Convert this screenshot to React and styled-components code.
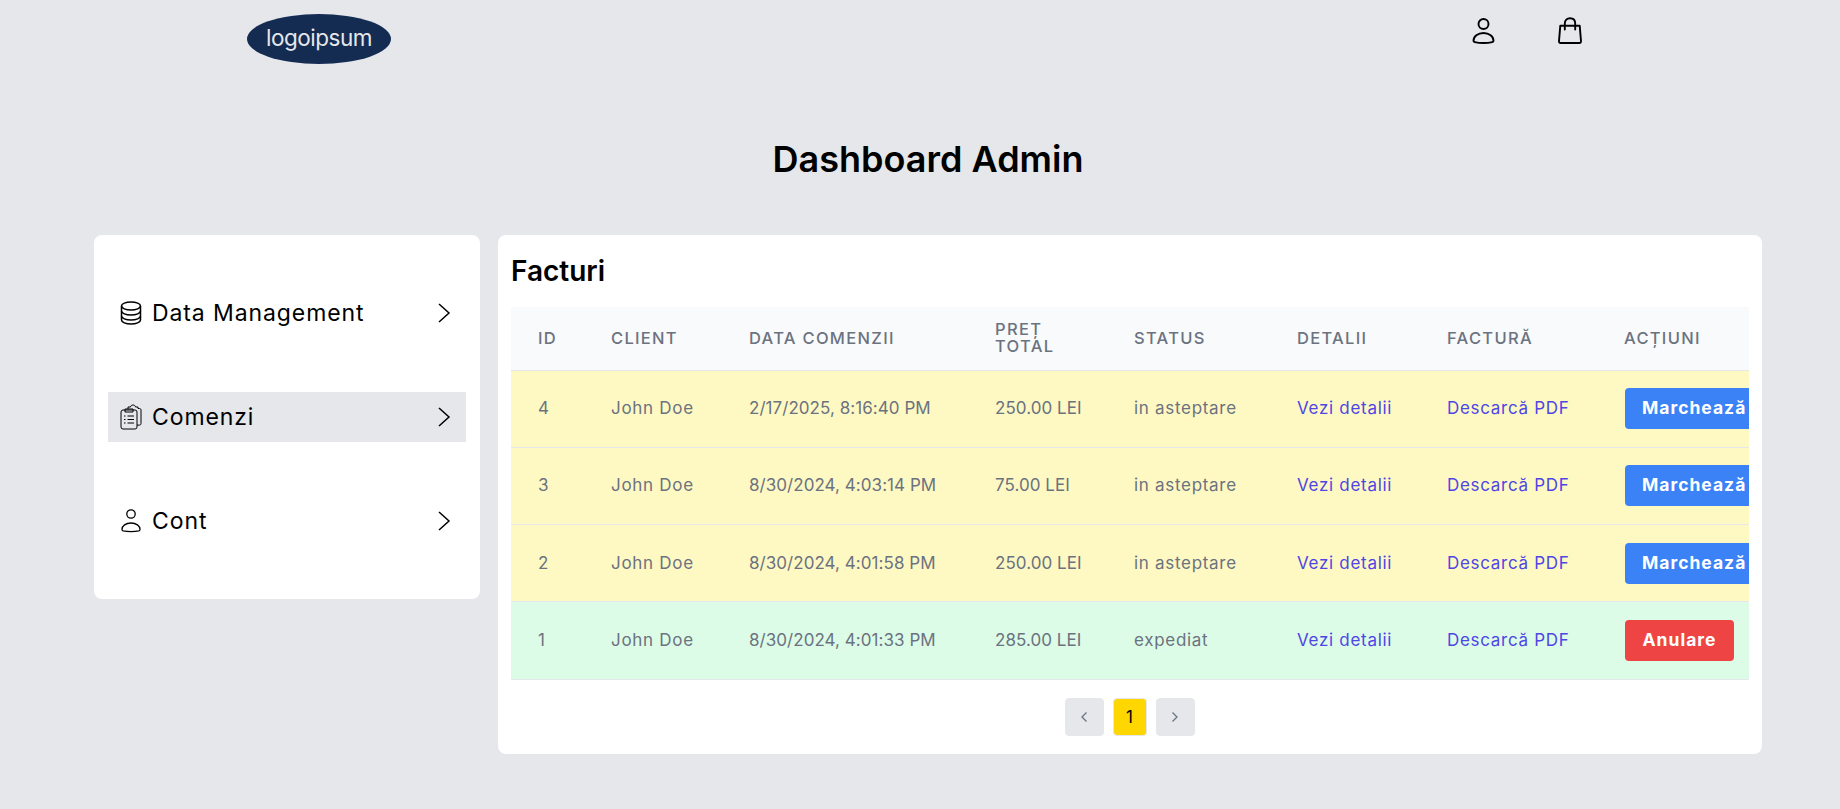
import React from 'react';
import styled, { createGlobalStyle } from 'styled-components';

const Global = createGlobalStyle`
  html, body { margin: 0; padding: 0; background: #e5e7eb; }
  body { font-family: Inter, "Noto Sans", "Liberation Sans", sans-serif; color: #000; overflow: hidden; }
  * { box-sizing: border-box; }
`;

const Page = styled.div`
  height: 809px;
  background: #e5e7eb;
`;

const Header = styled.header`
  display: flex;
  justify-content: space-between;
  align-items: flex-start;
  height: 108px;
  padding: 14px 256px 0 247px;
`;

const Logo = styled.div`
  width: 144px;
  height: 50px;
  border-radius: 50%;
  background: #142c52;
  color: #e5e7eb;
  display: flex;
  align-items: center;
  justify-content: center;
  font-size: 22.5px;
  letter-spacing: -0.5px;
  padding-bottom: 3px;
`;

const HeaderIcons = styled.div`
  display: flex;
  gap: 59px;
  padding-top: 3px;
`;

const Title = styled.h1`
  margin: 0;
  height: 127px;
  padding: 24px 0 0 94px;
  width: 1762px;
  text-align: center;
  font-size: 36px;
  line-height: 54px;
  font-weight: 600;
`;

const Content = styled.div`
  display: flex;
  align-items: flex-start;
  gap: 18px;
  padding-left: 94px;
`;

const Sidebar = styled.nav`
  width: 386px;
  height: 364px;
  background: #fff;
  border-radius: 8px;
  padding: 53px 14px;
  display: flex;
  flex-direction: column;
  gap: 54px;
`;

const NavItem = styled.a`
  height: 50px;
  display: flex;
  align-items: center;
  padding: 0 15px 0 12px;
  background: ${({ $active }) => ($active ? '#e5e7eb' : 'transparent')};
  font-size: 23px;
  letter-spacing: 0.9px;
`;

const NavLabel = styled.span`
  flex: 1;
  margin-left: 10px;
  padding-bottom: 1px;
`;

const Main = styled.main`
  width: 1264px;
  height: 519px;
  background: #fff;
  border-radius: 8px;
  padding: 13px;
`;

const Heading = styled.h2`
  margin: 0 0 13px;
  height: 46px;
  font-size: 28px;
  line-height: 47px;
  font-weight: 600;
`;

const TableWrap = styled.div`
  width: 1238px;
  overflow: hidden;
`;

const Table = styled.table`
  width: 1280px;
  table-layout: fixed;
  border-collapse: collapse;
`;

const Th = styled.th`
  height: 63px;
  padding: 0 10px 0 27px;
  background: #f9fafb;
  border-bottom: 1px solid #e5e7eb;
  color: #6b7280;
  text-align: left;
  font-size: 16.5px;
  line-height: 17px;
  font-weight: 500;
  letter-spacing: 1.3px;
  text-transform: uppercase;
`;

const Tr = styled.tr`
  background: ${({ $shipped }) => ($shipped ? '#dcfce7' : '#fef9c3')};
`;

const Td = styled.td`
  height: 77.3px;
  padding: 0 0 1px 27px;
  border-bottom: 1px solid #e5e7eb;
  color: #6b7280;
  font-size: 17px;
  letter-spacing: ${({ $numeric }) => ($numeric ? '0.05px' : '0.7px')};
  white-space: nowrap;
`;

const LinkText = styled.a`
  color: #4f46e5;
`;

const ActionButton = styled.button`
  display: block;
  width: ${({ $danger }) => ($danger ? '109px' : '140px')};
  height: 41px;
  margin: 1px 0 0 1px;
  padding: 0 0 2px ${({ $danger }) => ($danger ? '0' : '17px')};
  border: none;
  border-radius: 4px;
  background: ${({ $danger }) => ($danger ? '#ef4444' : '#3b82f6')};
  color: #fff;
  font-family: inherit;
  font-size: 17.5px;
  font-weight: 700;
  letter-spacing: 1px;
  text-align: ${({ $danger }) => ($danger ? 'center' : 'left')};
`;

const Pagination = styled.div`
  display: flex;
  justify-content: center;
  gap: 9px;
  margin-top: 18px;
  padding-right: 1px;
`;

const PageButton = styled.button`
  width: ${({ $current }) => ($current ? '34px' : '39px')};
  height: 38px;
  padding: 0;
  display: flex;
  align-items: center;
  justify-content: center;
  border: 1px solid #e5e7eb;
  border-radius: 4px;
  background: ${({ $current }) => ($current ? '#ffd700' : '#e5e7eb')};
  color: ${({ $current }) => ($current ? '#000' : '#6b7280')};
  font-family: inherit;
  font-size: 17px;
`;

const UserIcon = () => (
  <svg width="28" height="28" viewBox="0 0 28 28" fill="none" stroke="#000" strokeWidth="1.900">
    <circle cx="14.500" cy="7" r="5" />
    <path d="M4.500 23.800c0-4.200 4.300-7.800 10-7.800s10 3.600 10 7.800c0 .8-.5 1.100-1.300 1.300-2.500.6-5.400.9-8.700.9s-6.200-.3-8.700-.9c-.8-.2-1.300-.5-1.300-1.300z" strokeLinejoin="round" />
  </svg>
);

const BagIcon = () => (
  <svg width="28" height="28" viewBox="0 0 28 28" fill="none" stroke="#000" strokeWidth="1.900" strokeLinecap="round" strokeLinejoin="round">
    <path d="M4.300 8.700h19.400l1.300 15.500c.1 1.100-.6 1.800-1.600 1.800H4.600c-1 0-1.700-.7-1.600-1.800z" />
    <path d="M8.800 12.500V6.500C8.800 3.200 11 1.200 14 1.200s5.200 2 5.200 5.300v6" />
  </svg>
);

const DatabaseIcon = () => (
  <svg width="22" height="24" viewBox="0 0 22 24" fill="none" stroke="#000" strokeWidth="1.500">
    <ellipse cx="11" cy="5" rx="9.500" ry="4" />
    <path d="M1.500 5v14c0 2.200 4.300 4 9.500 4s9.500-1.800 9.500-4V5" />
    <path d="M1.500 10c0 2.200 4.300 4 9.500 4s9.500-1.800 9.500-4" />
    <path d="M1.500 15c0 2.200 4.300 4 9.500 4s9.500-1.800 9.500-4" />
  </svg>
);

const ClipboardIcon = () => (
  <svg width="22" height="26" viewBox="0 0 22 26" fill="none" stroke="#000" strokeWidth="1" strokeLinejoin="round">
    <path d="M8 5V3h2.500c.3-1.400 1.200-2 2.500-2s2.200.6 2.500 2H18v1.500h1.500c.9 0 1.500.6 1.500 1.500v13.500c0 1-.6 1.600-1.500 1.600H17" />
    <rect x="1" y="6" width="16" height="19" rx="2" />
    <path d="M5 5h8v3H5z" />
    <path d="M7.500 12H14M7.500 15.500H14M7.500 19H14M4 12h1.500M4 15.500h1.500M4 19h1.500" />
  </svg>
);

const SmallUserIcon = () => (
  <svg width="22" height="26" viewBox="0 0 22 26" fill="none" stroke="#000" strokeWidth="1.300" strokeLinejoin="round">
    <circle cx="11" cy="6" r="4.200" />
    <path d="M2 21.500c0-3.700 3.800-6.500 9-6.500s9 2.800 9 6.500c0 .8-.4 1.100-1.100 1.300-2.300.5-5 .8-7.900.8s-5.600-.3-7.900-.8c-.7-.2-1.100-.5-1.100-1.300z" />
  </svg>
);

const Chevron = () => (
  <svg width="14" height="22" viewBox="0 0 14 22" fill="none" stroke="#000" strokeWidth="1.500">
    <path d="M2 2l10 9-10 9" />
  </svg>
);

const PageChevron = ({ flip }) => (
  <svg width="8" height="12" viewBox="0 0 8 12" fill="none" stroke="currentColor" strokeWidth="1.300">
    <path d={flip ? 'M6.500 1.500L2 6l4.500 4.500' : 'M1.500 1.500L6 6l-4.500 4.500'} />
  </svg>
);

const navItems = [
  { label: 'Data Management', icon: <DatabaseIcon /> },
  { label: 'Comenzi', icon: <ClipboardIcon />, active: true },
  { label: 'Cont', icon: <SmallUserIcon /> },
];

const columns = [
  { label: 'ID', width: 73 },
  { label: 'Client', width: 138 },
  { label: 'Data comenzii', width: 246 },
  { label: 'Preț total', width: 139 },
  { label: 'Status', width: 163 },
  { label: 'Detalii', width: 150 },
  { label: 'Factură', width: 177 },
  { label: 'Acțiuni', width: 194 },
];

const orders = [
  { id: 4, date: '2/17/2025, 8:16:40 PM', total: '250.00 LEI', status: 'in asteptare' },
  { id: 3, date: '8/30/2024, 4:03:14 PM', total: '75.00 LEI', status: 'in asteptare' },
  { id: 2, date: '8/30/2024, 4:01:58 PM', total: '250.00 LEI', status: 'in asteptare' },
  { id: 1, date: '8/30/2024, 4:01:33 PM', total: '285.00 LEI', status: 'expediat' },
];

export default function App() {
  return (
    <Page>
      <Global />
      <Header>
        <Logo>logoipsum</Logo>
        <HeaderIcons>
          <UserIcon />
          <BagIcon />
        </HeaderIcons>
      </Header>
      <Title>Dashboard Admin</Title>
      <Content>
        <Sidebar>
          {navItems.map((item) => (
            <NavItem key={item.label} $active={item.active}>
              {item.icon}
              <NavLabel>{item.label}</NavLabel>
              <Chevron />
            </NavItem>
          ))}
        </Sidebar>
        <Main>
          <Heading>Facturi</Heading>
          <TableWrap>
            <Table>
              <colgroup>
                {columns.map((col) => (
                  <col key={col.label} width={col.width} />
                ))}
              </colgroup>
              <thead>
                <tr>
                  {columns.map((col) => (
                    <Th key={col.label}>{col.label}</Th>
                  ))}
                </tr>
              </thead>
              <tbody>
                {orders.map((order) => {
                  const shipped = order.status === 'expediat';
                  return (
                    <Tr key={order.id} $shipped={shipped}>
                      <Td $numeric>{order.id}</Td>
                      <Td>John Doe</Td>
                      <Td $numeric>{order.date}</Td>
                      <Td $numeric>{order.total}</Td>
                      <Td>{order.status}</Td>
                      <Td><LinkText>Vezi detalii</LinkText></Td>
                      <Td><LinkText>Descarcă PDF</LinkText></Td>
                      <Td>
                        <ActionButton $danger={shipped}>{shipped ? 'Anulare' : 'Marchează'}</ActionButton>
                      </Td>
                    </Tr>
                  );
                })}
              </tbody>
            </Table>
          </TableWrap>
          <Pagination>
            <PageButton><PageChevron flip /></PageButton>
            <PageButton $current>1</PageButton>
            <PageButton><PageChevron /></PageButton>
          </Pagination>
        </Main>
      </Content>
    </Page>
  );
}
